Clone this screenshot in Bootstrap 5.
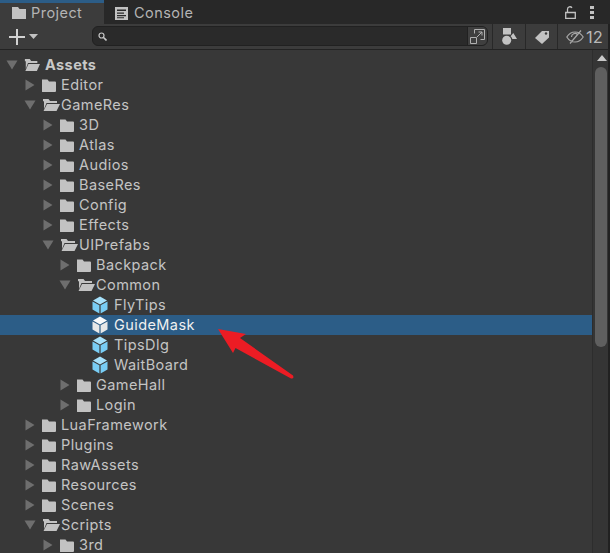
<!DOCTYPE html>
<html lang="en">
<head>
<meta charset="utf-8">
<title>Project</title>
<link rel="stylesheet" href="https://cdn.jsdelivr.net/npm/bootstrap@5.3.0/dist/css/bootstrap.min.css">
<style>
html,body{margin:0;height:100%;overflow:hidden;background:#383838}
body{font-family:Inter,"Noto Sans",sans-serif;font-size:14.5px;color:#c4c4c4;line-height:20px}
.pane{width:610px;height:553px;position:relative;overflow:hidden}
.tabbar{height:24px;background:#282828}
.tab-item{height:24px;font-size:14.5px;letter-spacing:.45px;color:#b4b4b4}
.tab-on{width:104px;background:#3c3c3c;border-top:3px solid #2c5d87;padding-left:12px;padding-bottom:1px;gap:5px}
.tab-off{padding-left:11px;padding-top:2px;gap:6px;width:110px}
.tab-right{margin-left:auto;padding-right:16px;gap:14px}
.toolbar{height:26px;background:#3c3c3c;border-bottom:1px solid #232323}
.plusbox{width:92px;padding-left:9px;gap:4px}
.searchbox{width:396px;height:20px;background:#2a2a2a;border:1px solid #212121;border-radius:6px;padding-left:5px;margin-top:2px}
.searchend{margin-left:auto;width:20px;height:18px;background:#3f3f3f;border-left:1px solid #212121;border-radius:0 5px 5px 0;justify-content:center;align-items:center}
.toolcell{height:25px;border-left:1px solid #282828;justify-content:center;align-items:center}
.cw1{width:33px;margin-left:4px}.cw2{width:32px}
.cw3{flex:1;gap:2px;font-size:16.5px;color:#b8b8b8;justify-content:flex-start;padding-left:8px}
.body-area{height:503px}
.tree{width:592px;padding-top:5px}
.rowline{height:20px;align-items:center;white-space:nowrap;letter-spacing:.42px}
.rowsel{background:#2c5d87;color:#f0f0f0}
.d0{padding-left:6px}.d1{padding-left:24px}.d2{padding-left:42px}.d3{padding-left:59px}.d4{padding-left:92px}
.arr{width:12px;height:12px;flex:none}
.fld{width:14px;height:13px;flex:none;margin-left:6px;margin-right:5px}
.fldo{width:18px;height:14px;flex:none;margin-left:6px;margin-right:1px}
.d0 .fldo{width:16px;margin-right:5px}
.cube{width:16px;height:18px;flex:none;margin-right:6px}
.rootname{font-weight:700;color:#c8c8c8}
.scrolltrack{width:16px;background:#353535;border-left:1px solid #2d2d2d;position:relative}
.scrollup{display:block;margin:5px 0 0 4px}
.thumb{width:12px;height:280px;margin:6px 0 0 2px;border-radius:6px;background:#5f5f5f}
.edge{width:2px;background:#212121}
.overlay{position:absolute;left:0;top:0;pointer-events:none}
</style>
</head>
<body>
<svg width="0" height="0" class="d-block" aria-hidden="true" style="position:absolute">
<defs>
<symbol id="open" viewBox="0 0 18 14" preserveAspectRatio="none"><path fill="#c2c2c2" d="M1 1h5.500l1.500 2H15v2H4.500L2 11V3.200H1zM5 6H18l-3.500 7H1.500z"/></symbol>
<symbol id="closed" viewBox="0 0 14 13"><path fill="#c2c2c2" d="M0 .5h5.500L7 2.500h6a1 1 0 0 1 1 1v8.500a1 1 0 0 1-1 1H.5a.5.5 0 0 1-.5-.5z"/></symbol>
<symbol id="cubeb" viewBox="0 0 16 18"><path fill="#a6e1fb" d="M8 .6l7 3.900-7 3.900-7-3.900z"/><path fill="#78cdf5" d="M.5 5.400l6.900 3.900v8.100L.5 13.500z"/><path fill="#78cdf5" d="M15.500 5.400L8.600 9.300v8.100l6.900-3.900z"/></symbol>
<symbol id="cubew" viewBox="0 0 16 18"><path fill="#fafafa" d="M8 .6l7 3.900-7 3.900-7-3.900z"/><path fill="#e8e8e8" d="M.5 5.400l6.900 3.900v8.100L.5 13.500z"/><path fill="#e8e8e8" d="M15.500 5.400L8.600 9.300v8.100l6.900-3.900z"/></symbol>
<symbol id="right" viewBox="0 0 12 12"><path fill="#6e6e6e" d="M1.500 .5l9 5.500-9 5.500z"/></symbol>
<symbol id="down" viewBox="0 0 12 12"><path fill="#6e6e6e" d="M.5 1.500h11L6 10.500z"/></symbol>
</defs>
</svg>
<div class="pane">
  <div class="tabbar d-flex">
    <div class="tab-item tab-on d-flex align-items-center">
      <svg width="14" height="12" viewBox="0 0 14 12"><path fill="#c2c2c2" d="M0 0h6l1.500 2H14v10H0z"/></svg><span>Project</span>
    </div>
    <div class="tab-item tab-off d-flex align-items-center">
      <svg width="13" height="13" viewBox="0 0 13 13"><path fill="#c2c2c2" d="M0 0h13v13H0z"/><path fill="#282828" d="M2 2.500h9v1.500H2zM2 5.500h7v1.200H2zM2 8h9v1.200H2zM2 10.300h7v1H2z"/></svg><span>Console</span>
    </div>
    <div class="tab-right d-flex align-items-center">
      <svg width="11" height="13" viewBox="0 0 11 13"><path fill="none" stroke="#c2c2c2" stroke-width="1.300" d="M.7 6.500h9.600v5.800H.7zM2.500 6V3.200A2.500 2.500 0 0 1 7 1.800"/></svg>
      <svg width="4" height="13" viewBox="0 0 4 13"><path fill="#c2c2c2" d="M0 0h4v3H0zM0 5h4v3H0zM0 10h4v3H0z"/></svg>
    </div>
  </div>
  <div class="toolbar d-flex">
    <div class="plusbox d-flex align-items-center">
      <svg width="16" height="16" viewBox="0 0 16 16"><path fill="#d2d2d2" d="M7 0h2v7h7v2H9v7H7V9H0V7h7z"/></svg>
      <svg width="9" height="5" viewBox="0 0 9 5"><path fill="#c2c2c2" d="M0 0h9L4.500 5z"/></svg>
    </div>
    <div class="searchbox d-flex align-items-center">
      <svg width="9" height="9" viewBox="0 0 9 9"><circle cx="3.500" cy="3.500" r="2.500" fill="none" stroke="#c8c8c8" stroke-width="1.200"/><path stroke="#c8c8c8" stroke-width="1.600" d="M5.300 5.300L8.500 8.500"/></svg>
      <div class="searchend d-flex">
        <svg width="15" height="15" viewBox="0 0 15 15"><path fill="none" stroke="#b0b0b0" d="M4.500 4.500V.5h10v10h-4M.5 8.500h6v6h-6zM7 8l5-5M8.500 3H12v3.500"/></svg>
      </div>
    </div>
    <div class="toolcell cw1 d-flex">
      <svg width="15" height="17" viewBox="0 0 15 17"><path fill="#c2c2c2" d="M1 0h8v6.500H1z"/><path fill="#c2c2c2" d="M11.300 5l3.700 6h-4.600a5.500 5.500 0 0 0-1.800-2.700z"/><circle cx="4.700" cy="12.300" r="4.500" fill="#c2c2c2"/></svg>
    </div>
    <div class="toolcell cw2 d-flex">
      <svg width="14" height="14" viewBox="0 0 14 14"><path fill="#c2c2c2" d="M7 1h7v6.500L7 14 0 8z"/><circle cx="11" cy="3.500" r="1.200" fill="#3c3c3c"/></svg>
    </div>
    <div class="toolcell cw3 d-flex">
      <svg width="18" height="14" viewBox="0 0 18 14"><path fill="none" stroke="#a8a8a8" stroke-width="1.200" d="M.8 7C3 3.500 6 2 9 2s6 1.500 8.200 5C15 10.500 12 12 9 12S3 10.500.8 7zM4 13.500L15 .5M5.500 7a3.500 3.500 0 0 1 6-2.500"/></svg><span>12</span>
    </div>
    <div class="edge"></div>
  </div>
  <div class="body-area d-flex">
    <div class="tree">
      <div class="rowline d-flex d0"><svg class="arr"><use href="#down"/></svg><svg class="fldo"><use href="#open"/></svg><span class="rootname">Assets</span></div>
      <div class="rowline d-flex d1"><svg class="arr"><use href="#right"/></svg><svg class="fld"><use href="#closed"/></svg><span>Editor</span></div>
      <div class="rowline d-flex d1"><svg class="arr"><use href="#down"/></svg><svg class="fldo"><use href="#open"/></svg><span>GameRes</span></div>
      <div class="rowline d-flex d2"><svg class="arr"><use href="#right"/></svg><svg class="fld"><use href="#closed"/></svg><span>3D</span></div>
      <div class="rowline d-flex d2"><svg class="arr"><use href="#right"/></svg><svg class="fld"><use href="#closed"/></svg><span>Atlas</span></div>
      <div class="rowline d-flex d2"><svg class="arr"><use href="#right"/></svg><svg class="fld"><use href="#closed"/></svg><span>Audios</span></div>
      <div class="rowline d-flex d2"><svg class="arr"><use href="#right"/></svg><svg class="fld"><use href="#closed"/></svg><span>BaseRes</span></div>
      <div class="rowline d-flex d2"><svg class="arr"><use href="#right"/></svg><svg class="fld"><use href="#closed"/></svg><span>Config</span></div>
      <div class="rowline d-flex d2"><svg class="arr"><use href="#right"/></svg><svg class="fld"><use href="#closed"/></svg><span>Effects</span></div>
      <div class="rowline d-flex d2"><svg class="arr"><use href="#down"/></svg><svg class="fldo"><use href="#open"/></svg><span>UIPrefabs</span></div>
      <div class="rowline d-flex d3"><svg class="arr"><use href="#right"/></svg><svg class="fld"><use href="#closed"/></svg><span>Backpack</span></div>
      <div class="rowline d-flex d3"><svg class="arr"><use href="#down"/></svg><svg class="fldo"><use href="#open"/></svg><span>Common</span></div>
      <div class="rowline d-flex d4"><svg class="cube"><use href="#cubeb"/></svg><span>FlyTips</span></div>
      <div class="rowline d-flex d4 rowsel"><svg class="cube"><use href="#cubew"/></svg><span>GuideMask</span></div>
      <div class="rowline d-flex d4"><svg class="cube"><use href="#cubeb"/></svg><span>TipsDlg</span></div>
      <div class="rowline d-flex d4"><svg class="cube"><use href="#cubeb"/></svg><span>WaitBoard</span></div>
      <div class="rowline d-flex d3"><svg class="arr"><use href="#right"/></svg><svg class="fld"><use href="#closed"/></svg><span>GameHall</span></div>
      <div class="rowline d-flex d3"><svg class="arr"><use href="#right"/></svg><svg class="fld"><use href="#closed"/></svg><span>Login</span></div>
      <div class="rowline d-flex d1"><svg class="arr"><use href="#right"/></svg><svg class="fld"><use href="#closed"/></svg><span>LuaFramework</span></div>
      <div class="rowline d-flex d1"><svg class="arr"><use href="#right"/></svg><svg class="fld"><use href="#closed"/></svg><span>Plugins</span></div>
      <div class="rowline d-flex d1"><svg class="arr"><use href="#right"/></svg><svg class="fld"><use href="#closed"/></svg><span>RawAssets</span></div>
      <div class="rowline d-flex d1"><svg class="arr"><use href="#right"/></svg><svg class="fld"><use href="#closed"/></svg><span>Resources</span></div>
      <div class="rowline d-flex d1"><svg class="arr"><use href="#right"/></svg><svg class="fld"><use href="#closed"/></svg><span>Scenes</span></div>
      <div class="rowline d-flex d1"><svg class="arr"><use href="#down"/></svg><svg class="fldo"><use href="#open"/></svg><span>Scripts</span></div>
      <div class="rowline d-flex d2"><svg class="arr"><use href="#right"/></svg><svg class="fld"><use href="#closed"/></svg><span>3rd</span></div>
    </div>
    <div class="scrolltrack">
      <svg class="scrollup" width="10" height="6" viewBox="0 0 10 6"><path fill="#c8c8c8" d="M5 0l5 6H0z"/></svg>
      <div class="thumb"></div>
    </div>
    <div class="edge"></div>
  </div>
  <svg class="overlay" width="610" height="553" viewBox="0 0 610 553"><path fill="#ec1c24" d="M218 329L246 334 240 338 293 375.500Q294.500 379 291 378.500L235.500 348 233 353z"/></svg>
</div>
</body>
</html>
